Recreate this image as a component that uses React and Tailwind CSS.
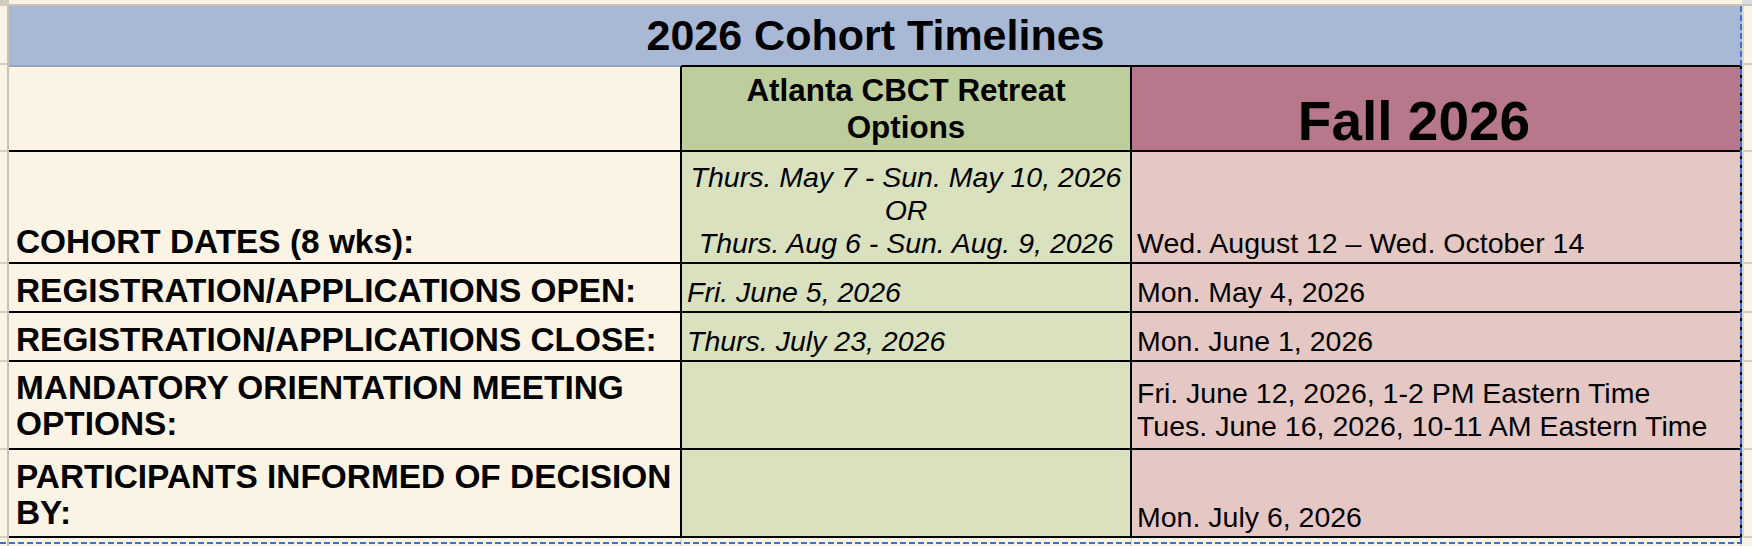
const rows = [
  {
    h: "h-[112px]",
    label: ["COHORT DATES (8 wks):"],
    green: ["Thurs. May 7 - Sun. May 10, 2026", "OR", "Thurs. Aug 6 - Sun. Aug. 9, 2026"],
    greenCenter: true,
    pink: ["Wed. August 12 \u2013 Wed. October 14"],
  },
  {
    h: "h-[49px]",
    label: ["REGISTRATION/APPLICATIONS OPEN:"],
    green: ["Fri. June 5, 2026"],
    pink: ["Mon. May 4, 2026"],
  },
  {
    h: "h-[49px]",
    label: ["REGISTRATION/APPLICATIONS CLOSE:"],
    green: ["Thurs. July 23, 2026"],
    pink: ["Mon. June 1, 2026"],
  },
  {
    h: "h-[88px]",
    label: ["MANDATORY ORIENTATION MEETING", "OPTIONS:"],
    green: [],
    pink: ["Fri. June 12, 2026, 1-2 PM Eastern Time", "Tues. June 16, 2026, 10-11 AM Eastern Time"],
    pinkPad: "pb-[5px]",
    labelPad: "pb-[6px]",
  },
  {
    h: "h-[88px]",
    label: ["PARTICIPANTS INFORMED OF DECISION", "BY:"],
    green: [],
    pink: ["Mon. July 6, 2026"],
    labelPad: "pb-[5px]",
  },
];

const gutterHeights = ["h-[59px]", "h-[87px]", "h-[112px]", "h-[49px]", "h-[49px]", "h-[88px]", "h-[88px]"];

function Gutter({ className }) {
  return (
    <div className={className}>
      {gutterHeights.map((h, i) => (
        <div key={i} className={`${h} border-b-2 border-[#d5cebf]`} />
      ))}
    </div>
  );
}

export default function App() {
  return (
    <div className="w-[1752px] h-[546px] overflow-hidden bg-[#fbf4e4] text-black font-['Liberation_Sans',Arial,sans-serif]">
      {/* column header strip */}
      <div className="flex h-[6px]">
        <div className="w-[9px] bg-[#d3cbbb]" />
        <div className="flex-1 border-b-2 border-[#cbc3b4]" />
        <div className="w-[10px] bg-[#d8dbdf] border-b-2 border-[#cbc3b4]" />
      </div>

      <div className="relative flex">
        <Gutter className="w-[9px] border-r-2 border-[#c9c1b2] flex flex-col" />

        <div className="w-[1733px] flex flex-col">
          {/* title */}
          <div className="h-[59px] bg-[#a8b8d5] flex items-center justify-center">
            <span className="text-[43px] font-bold leading-none">2026 Cohort Timelines</span>
          </div>

          {/* column headers */}
          <div className="flex h-[87px]">
            <div className="w-[673px] border-t-2 border-t-[#93a4c0] border-b-2 border-b-black border-r-2 border-r-black" />
            <div className="w-[450px] bg-[#bdcd9b] border-t-2 border-b-2 border-r-2 border-black flex items-center justify-center text-center">
              <span className="text-[31.4px] font-bold leading-[37px]">
                Atlanta CBCT Retreat
                <br />
                Options
              </span>
            </div>
            <div className="w-[610px] bg-[#b7788c] border-t-2 border-b-2 border-r-2 border-black flex items-end justify-center pr-[44px]">
              <span className="text-[55px] font-bold leading-[58px]">Fall 2026</span>
            </div>
          </div>

          {rows.map((r, i) => (
            <div key={i} className={`flex ${r.h}`}>
              <div className={`w-[673px] border-b-2 border-r-2 border-black flex flex-col justify-end pl-[7px] pr-[1px] ${r.labelPad || "pb-[2px]"}`}>
                {r.label.map((t) => (
                  <div key={t} className="text-[33.4px] font-bold leading-[36px] whitespace-nowrap">
                    {t}
                  </div>
                ))}
              </div>
              <div
                className={`w-[450px] bg-[#d9e1bf] border-b-2 border-r-2 border-black flex flex-col justify-end px-[5px] pb-[2px] italic ${
                  r.greenCenter ? "items-center" : "items-start"
                }`}
              >
                {r.green.map((t) => (
                  <div key={t} className="text-[28.5px] leading-[33px] whitespace-nowrap">
                    {t}
                  </div>
                ))}
              </div>
              <div className={`w-[610px] bg-[#e5c8c4] border-b-2 border-r-2 border-black flex flex-col justify-end px-[5px] ${r.pinkPad || "pb-[2px]"}`}>
                {r.pink.map((t) => (
                  <div key={t} className="text-[28.5px] leading-[33px] whitespace-nowrap">
                    {t}
                  </div>
                ))}
              </div>
            </div>
          ))}
        </div>

        <Gutter className="flex-1 border-l-2 border-[#ddd7cb] flex flex-col" />

        {/* copy selection marching ants */}
        <div className="absolute top-0 left-[1740px] w-[2px] h-[538px] bg-[repeating-linear-gradient(to_bottom,#3c6fd6_0_6px,transparent_6px_9px)]" />
        <div className="absolute top-[536px] left-0 w-[1742px] h-[2px] bg-[repeating-linear-gradient(to_right,#3c6fd6_0_6px,transparent_6px_9px)]" />
      </div>

      {/* next row strip */}
      <div className="flex h-[8px]">
        <div className="w-[9px] border-r-2 border-[#c9c1b2]" />
        <div className="w-[673px] border-r-2 border-[#e2dccf]" />
        <div className="w-[450px] border-r-2 border-[#e2dccf]" />
        <div className="w-[610px] border-r-2 border-[#e2dccf]" />
      </div>
    </div>
  );
}
